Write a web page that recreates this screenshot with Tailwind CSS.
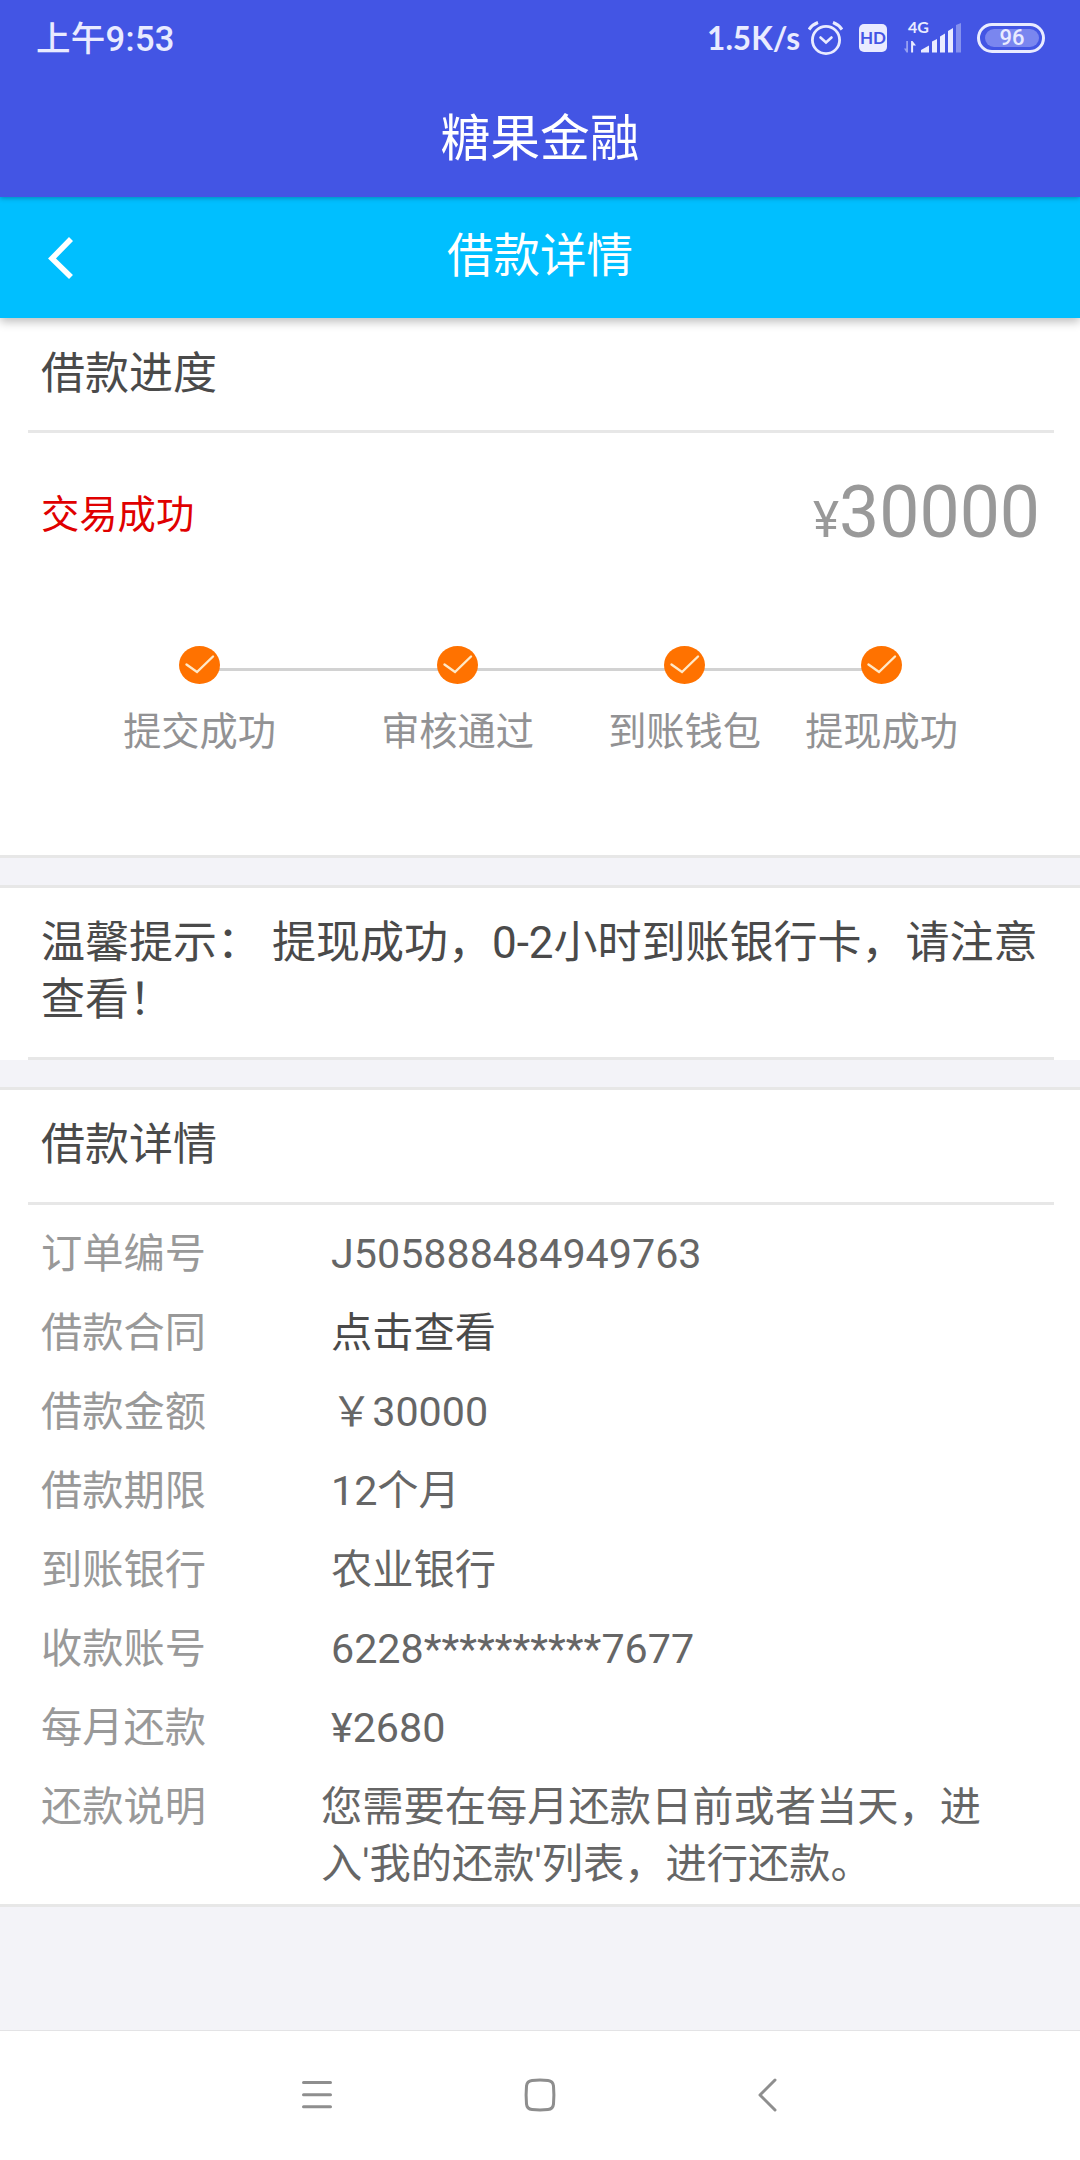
<!DOCTYPE html>
<html lang="zh-CN">
  <head>
    <meta charset="UTF-8" />
    <meta name="viewport" content="width=device-width, initial-scale=1.0" />
    <title>借款详情</title>
    <script src="https://cdn.jsdelivr.net/npm/@tailwindcss/browser@4"></script>
  </head>
  <body class="bg-[#f3f3f8] font-[Roboto,'Noto_Sans_CJK_SC',sans-serif]">
    <div class="flex flex-col w-[1080px] h-[2160px] overflow-hidden">
      <!-- Status bar + app title -->
      <header class="relative z-20 h-[197px] shrink-0 bg-[#4355e4] text-white shadow-[0_1px_5px_rgba(0,0,0,0.3)]">
        <div class="flex items-center justify-between h-[76px] pl-9 pr-[35px] text-[#e9ebff] font-[Lato,'Noto_Sans_CJK_SC',sans-serif]">
          <span class="pt-[2px] text-[34.5px] leading-[76px] font-medium tracking-[0.3px] font-[Roboto,'Noto_Sans_CJK_SC',sans-serif]">上午9:53</span>
          <div class="flex items-center">
            <span class="text-[31.5px] leading-[76px] font-bold mr-2">1.5K/s</span>
            <!-- Alarm -->
            <svg class="w-[35px] h-[34px] mr-4" viewBox="0 0 35 34" fill="none" stroke="currentColor" stroke-width="2.8">
              <circle cx="18" cy="19" r="13.6" />
              <path d="M12.500 16.500l5.500 5 5.500-5" stroke-width="2.600" stroke-linecap="round" />
              <path d="M1 8.500Q4.500 3.500 10 1.500M34 8.500Q30.500 3.500 25 1.500" stroke-width="3.200" />
            </svg>
            <!-- HD -->
            <span class="flex items-center justify-center w-7 h-7 mr-4 rounded-[5px] bg-[#e9ebff] text-[#4355e4] text-[17px] font-bold">HD</span>
            <!-- Signal -->
            <div class="relative w-[58px] h-8 mr-4">
              <span class="absolute left-[5px] -top-[3px] text-[16px] leading-4 font-bold">4G</span>
              <svg class="w-[58px] h-8" viewBox="0 0 58 32" fill="currentColor">
                <path d="M5 19v11.500h-1.500L1 26.500h2.200V19z" opacity="0.500" />
                <path d="M10.100 30.500h-2V19h1.400l3.500 4.500h-2.900z" />
                <path d="M18 30.500v-2.500l8-4.500v7zM29 30.500V19.500l5-2.500v13.500zM37 30.500V14.500l5-3v19zM45 30.500V9l5-3v24.500z" />
                <path d="M53 30.500V3l5-2v29.500z" opacity="0.400" />
              </svg>
            </div>
            <!-- Battery -->
            <div class="flex w-[68px] h-[30px] rounded-full border-[3px] border-[#e9ebff] p-[3px] pl-[5px]">
              <span class="w-full h-full rounded-full bg-[#7a86ef] text-center text-[22px] leading-[18px] font-medium font-[Roboto]">96</span>
            </div>
          </div>
        </div>
        <h1 class="text-center text-[49.8px] leading-[127px]">糖果金融</h1>
      </header>

      <!-- Page bar -->
      <div class="relative z-10 flex items-center justify-center h-[121px] shrink-0 bg-[#00bfff] text-white shadow-[0_4px_9px_rgba(0,0,0,0.25)]">
        <svg class="absolute left-12 top-[39px] w-[26px] h-[44px]" viewBox="0 0 26 44" fill="none" stroke="currentColor" stroke-width="5.600">
          <path d="M23 3L4 22.500 23 41" />
        </svg>
        <h2 class="text-[46.5px] leading-[119px] pb-[2px]">借款详情</h2>
      </div>

      <!-- Progress -->
      <section class="shrink-0 h-[540px] bg-white border-b-3 border-[#e7e7e7]">
        <div class="ml-7 mr-[26px] h-[115px] pl-[13px] border-b-3 border-[#e7e7e7] text-[44px] leading-[112px] text-[#4a4a4a]">借款进度</div>
        <div class="flex justify-between pl-[41px] pr-10 pt-9 h-[213px]">
          <span class="text-[38.3px] leading-[91px] text-[#e00000]">交易成功</span>
          <span class="text-[71.5px] leading-[87px] text-[#999]"><span class="text-[49.5px]">¥</span>30000</span>
        </div>
        <div class="relative ml-[123px] flex text-[38.2px] leading-[50px] text-[#929294]">
          <div class="absolute left-[77px] top-[22px] w-[680px] h-[3px] bg-[#d2d2d2]"></div>
          <div class="relative flex flex-col items-center w-[153px] mr-[105px]">
            <svg class="w-[41px] h-[38px]" viewBox="0 0 41 38" fill="none">
              <ellipse cx="20.500" cy="19" rx="20.500" ry="19" fill="#ff7200" />
              <path d="M7.500 18.500l10.500 7.500L34 10.500" stroke="#ffe9c8" stroke-width="2.400" stroke-linecap="round" />
            </svg>
            <span class="mt-[23px] whitespace-nowrap">提交成功</span>
          </div>
          <div class="relative flex flex-col items-center w-[153px] mr-[74px]">
            <svg class="w-[41px] h-[38px]" viewBox="0 0 41 38" fill="none">
              <ellipse cx="20.500" cy="19" rx="20.500" ry="19" fill="#ff7200" />
              <path d="M7.500 18.500l10.500 7.500L34 10.500" stroke="#ffe9c8" stroke-width="2.400" stroke-linecap="round" />
            </svg>
            <span class="mt-[23px] whitespace-nowrap">审核通过</span>
          </div>
          <div class="relative flex flex-col items-center w-[153px] mr-[44px]">
            <svg class="w-[41px] h-[38px]" viewBox="0 0 41 38" fill="none">
              <ellipse cx="20.500" cy="19" rx="20.500" ry="19" fill="#ff7200" />
              <path d="M7.500 18.500l10.500 7.500L34 10.500" stroke="#ffe9c8" stroke-width="2.400" stroke-linecap="round" />
            </svg>
            <span class="mt-[23px] whitespace-nowrap">到账钱包</span>
          </div>
          <div class="relative flex flex-col items-center w-[153px]">
            <svg class="w-[41px] h-[38px]" viewBox="0 0 41 38" fill="none">
              <ellipse cx="20.500" cy="19" rx="20.500" ry="19" fill="#ff7200" />
              <path d="M7.500 18.500l10.500 7.500L34 10.500" stroke="#ffe9c8" stroke-width="2.400" stroke-linecap="round" />
            </svg>
            <span class="mt-[23px] whitespace-nowrap">提现成功</span>
          </div>
        </div>
      </section>

      <!-- Tip -->
      <section class="shrink-0 mt-[27px] bg-white border-t-3 border-[#e7e7e7]">
        <div class="ml-7 mr-[26px] h-[172px] pl-[13px] pt-[27px] border-b-3 border-[#e7e7e7] text-[44px] leading-[57px] text-[#4a4a4a]">
          <p class="whitespace-nowrap">温馨提示： 提现成功，0-2小时到账银行卡，请注意<br />查看！</p>
        </div>
      </section>

      <!-- Loan details -->
      <section class="shrink-0 h-[820px] mt-[27px] bg-white border-y-3 border-[#e7e7e7]">
        <div class="ml-7 mr-[26px] h-[115px] pl-[13px] border-b-3 border-[#e7e7e7] text-[44px] leading-[110px] text-[#4a4a4a]">借款详情</div>
        <dl class="grid grid-cols-[290px_1fr] gap-y-[22px] pl-[41px] pt-[21px] text-[41.25px] leading-[57px] text-[#666]">
          <dt class="text-[#999]">订单编号</dt>
          <dd>J505888484949763</dd>
          <dt class="text-[#999]">借款合同</dt>
          <dd class="text-[#4a4a4a]">点击查看</dd>
          <dt class="text-[#999]">借款金额</dt>
          <dd>￥30000</dd>
          <dt class="text-[#999]">借款期限</dt>
          <dd>12个月</dd>
          <dt class="text-[#999]">到账银行</dt>
          <dd>农业银行</dd>
          <dt class="text-[#999]">收款账号</dt>
          <dd>6228**********7677</dd>
          <dt class="text-[#999]">每月还款</dt>
          <dd>¥2680</dd>
          <dt class="text-[#999]">还款说明</dt>
          <dd class="-ml-[10px] whitespace-nowrap">您需要在每月还款日前或者当天，进<br />入'我的还款'列表，进行还款。</dd>
        </dl>
      </section>

      <!-- System navigation -->
      <nav class="grid grid-cols-[32px_34px_20px] items-center justify-between mt-auto h-[130px] shrink-0 pl-[301px] pr-[303px] pb-[2px] bg-white border-t border-[#e3e3e5] text-[#8e8e8e]">
        <svg class="w-[32px] h-[34px]" viewBox="0 0 32 34" fill="none" stroke="currentColor" stroke-width="3" stroke-linecap="round">
          <path d="M2.500 4.500h27M2.500 16.700h27M2.500 28.700h27" />
        </svg>
        <svg class="-ml-[5px] w-[34px] h-[34px]" viewBox="0 0 34 34" fill="none" stroke="currentColor" stroke-width="3">
          <path d="M9 2.500Q17 1.700 25 2.500Q30 3 30.500 8Q31.300 17 30.500 26Q30 31 25 31.500Q17 32.300 9 31.500Q4 31 3.500 26Q2.700 17 3.500 8Q4 3 9 2.500z" />
        </svg>
        <svg class="w-[20px] h-[34px]" viewBox="0 0 20 34" fill="none" stroke="currentColor" stroke-width="3" stroke-linecap="round" stroke-linejoin="round">
          <path d="M18 2L3 17 18 32" />
        </svg>
      </nav>
    </div>
  </body>
</html>
